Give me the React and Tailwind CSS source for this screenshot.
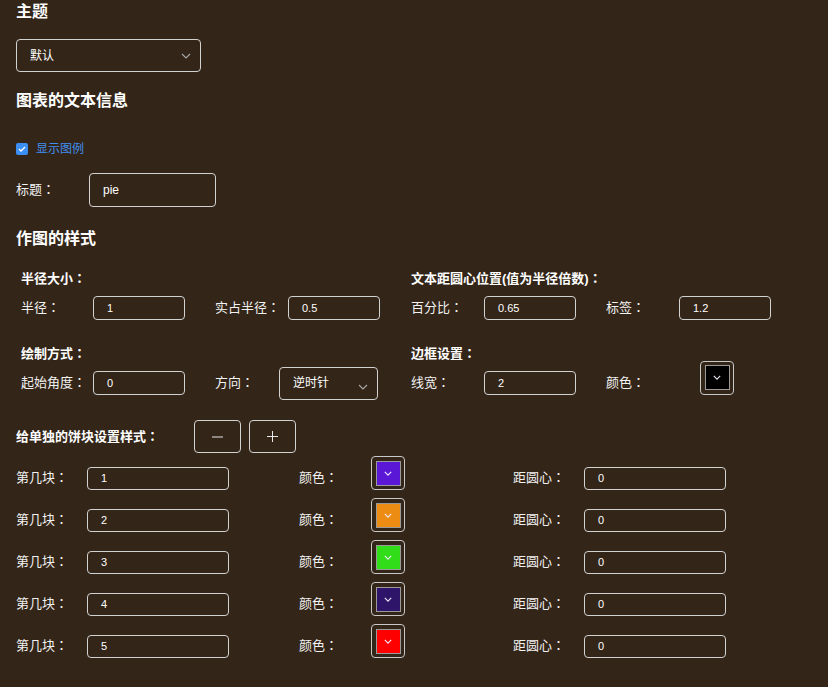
import React from 'react';

const Chevron = ({ className = '', color = '#a8a8a8', w = 10, h = 6, sw = 1.1 }) => (
  <svg width={w} height={h} viewBox="0 0 10 6" className={className} fill="none">
    <polyline points="1,1 5,5 9,1" stroke={color} strokeWidth={sw} />
  </svg>
);

// full-width colon centred, as in the reference
const Colon = () => (
  <span className="leading-none" style={{ fontFamily: '"Noto Sans CJK JP", sans-serif' }}>：</span>
);

const withColon = (text) => (
  <>
    {text}
    <Colon />
  </>
);

const Input = ({ value, className = '' }) => (
  <div className={`flex items-center border border-[#d2d2d2] rounded-[4px] px-[13px] text-[11px] text-white ${className}`}>
    {value}
  </div>
);

const Swatch = ({ color, className = '' }) => (
  <div className={`w-[34px] h-[34px] border border-[#c8c8c8] rounded-[4px] flex items-center justify-center ${className}`}>
    <div className="w-[25px] h-[25px] border border-[#9a9a9a] flex justify-center pt-[9px]" style={{ backgroundColor: color }}>
      <Chevron w={8} h={5} color="#ece6f6" sw={1.4} />
    </div>
  </div>
);

const Label = ({ children, className = '' }) => (
  <span className={`text-[13px] text-[#f2f2f2] leading-5 shrink-0 ${className}`}>{withColon(children)}</span>
);

const Sub = ({ children, className = '' }) => (
  <div className={`text-[13px] font-bold leading-5 h-5 ${className}`}>{withColon(children)}</div>
);

const pieces = [
  { n: '1', color: '#5b17d6' },
  { n: '2', color: '#ec8c13' },
  { n: '3', color: '#31dc19' },
  { n: '4', color: '#2f1569' },
  { n: '5', color: '#ff0000' },
];

export default function App() {
  return (
    <div
      className="min-h-screen w-full bg-[#332518] px-4 text-white"
      style={{ fontFamily: '"Liberation Sans", "Noto Sans CJK SC", sans-serif' }}
    >
      <h2 className="text-base font-bold leading-6">主题</h2>
      <div className="mt-[15px] w-[185px] h-[33px] border border-[#d2d2d2] rounded-[4px] flex items-center justify-between pl-[13px] pr-[9px]">
        <span className="text-[12px]">默认</span>
        <Chevron />
      </div>

      <h2 className="mt-[17px] text-base font-bold leading-6">图表的文本信息</h2>
      <label className="mt-[28px] flex items-center h-4 gap-2">
        <span className="w-3 h-3 rounded-[2px] bg-[#3b8ff2] flex items-center justify-center">
          <svg width="8" height="6" viewBox="0 0 8 6" fill="none">
            <polyline points="1,3 3,5 7,1" stroke="#fff" strokeWidth="1.3" />
          </svg>
        </span>
        <span className="text-[12px] text-[#3f8ef0]">显示图例</span>
      </label>
      <div className="mt-4 flex items-center h-[34px]">
        <Label className="w-[73px]">标题</Label>
        <div className="w-[127px] h-[34px] border border-[#d2d2d2] rounded-[4px] flex items-center px-[13px] text-[12px]">pie</div>
      </div>

      <h2 className="mt-5 text-base font-bold leading-6">作图的样式</h2>
      <div className="grid grid-cols-[390px_1fr] pl-[5px] mt-[18px]">
        <div>
          <Sub>半径大小</Sub>
          <div className="flex items-center h-[38px]">
            <Label className="w-[72px]">半径</Label>
            <Input value="1" className="w-[92px] h-[24px]" />
            <Label className="ml-[30px] w-[73px]">实占半径</Label>
            <Input value="0.5" className="w-[92px] h-[24px]" />
          </div>
          <Sub className="mt-[17px]">绘制方式</Sub>
          <div className="flex items-center h-[38px]">
            <Label className="w-[72px]">起始角度</Label>
            <Input value="0" className="w-[92px] h-[24px]" />
            <Label className="ml-[30px] w-[64px]">方向</Label>
            <div className="w-[99px] h-[33px] border border-[#d2d2d2] rounded-[4px] flex items-center justify-between pl-[13px] pr-[9px]">
              <span className="text-[12px]">逆时针</span>
              <Chevron className="mt-[8px]" />
            </div>
          </div>
        </div>
        <div>
          <Sub>文本距圆心位置(值为半径倍数)</Sub>
          <div className="flex items-center h-[38px]">
            <Label className="w-[73px]">百分比</Label>
            <Input value="0.65" className="w-[92px] h-[24px]" />
            <Label className="ml-[30px] w-[73px]">标签</Label>
            <Input value="1.2" className="w-[92px] h-[24px]" />
          </div>
          <Sub className="mt-[17px]">边框设置</Sub>
          <div className="flex items-center h-[38px]">
            <Label className="w-[73px]">线宽</Label>
            <Input value="2" className="w-[92px] h-[24px]" />
            <Label className="ml-[30px] w-[94px]">颜色</Label>
            <Swatch color="#000000" className="mb-[11px]" />
          </div>
        </div>
      </div>

      <div className="mt-[18px] flex items-center h-[33px]">
        <span className="text-[13px] font-bold leading-5 w-[178px]">{withColon('给单独的饼块设置样式')}</span>
        <button className="w-[47px] h-[33px] border border-[#d2d2d2] rounded-[4px] flex items-center justify-center text-[#e8e8e8]">
          <svg width="11" height="2" viewBox="0 0 11 2"><line x1="0" y1="1" x2="11" y2="1" stroke="#e8e8e8" strokeWidth="1" /></svg>
        </button>
        <button className="ml-2 w-[47px] h-[33px] border border-[#d2d2d2] rounded-[4px] flex items-center justify-center text-[#e8e8e8]">
          <svg width="11" height="11" viewBox="0 0 11 11">
            <line x1="0" y1="5.5" x2="11" y2="5.5" stroke="#e8e8e8" strokeWidth="1" />
            <line x1="5.5" y1="0" x2="5.5" y2="11" stroke="#e8e8e8" strokeWidth="1" />
          </svg>
        </button>
      </div>

      <div className="mt-1">
        {pieces.map((p) => (
          <div key={p.n} className="flex items-center h-[42px]">
            <Label className="w-[71px]">第几块</Label>
            <Input value={p.n} className="w-[142px] h-[23px]" />
            <Label className="ml-[70px] w-[72px]">颜色</Label>
            <Swatch color={p.color} className="mb-[10px]" />
            <Label className="ml-[108px] w-[71px]">距圆心</Label>
            <Input value="0" className="w-[142px] h-[23px]" />
          </div>
        ))}
      </div>
    </div>
  );
}
